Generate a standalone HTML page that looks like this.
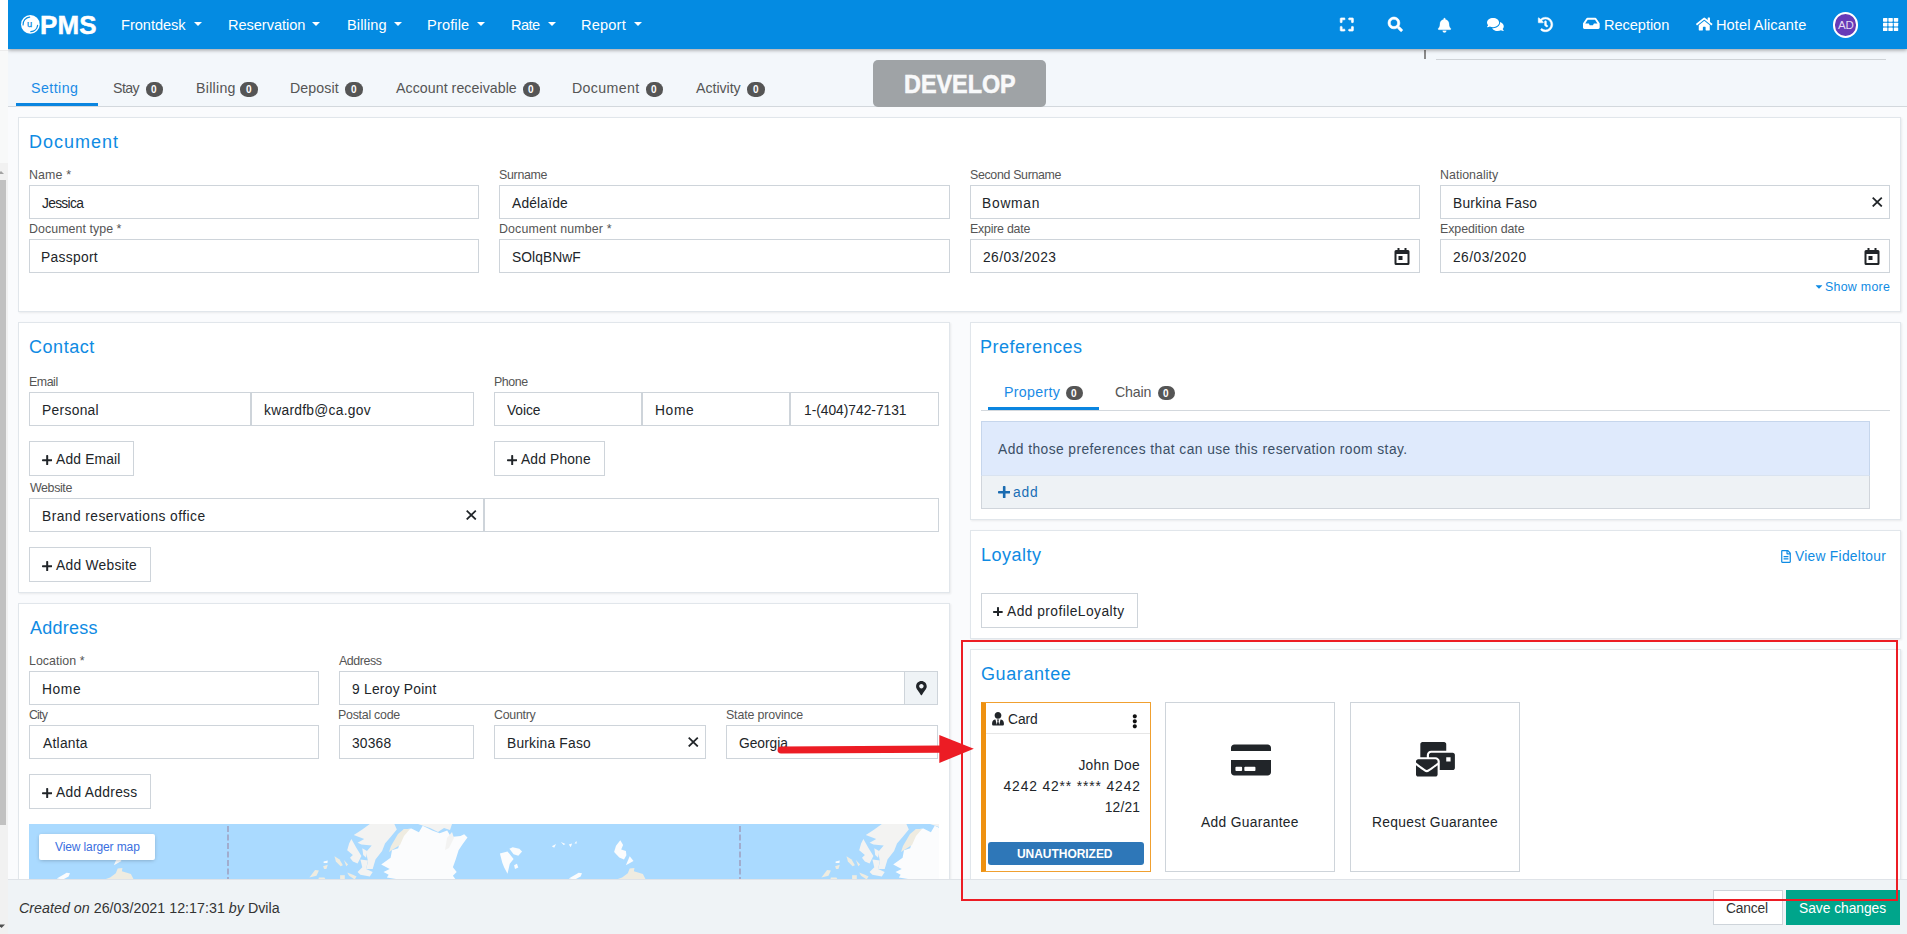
<!DOCTYPE html>
<html lang="en">
<head>
<meta charset="utf-8">
<title>PMS - Profile</title>
<style>
*{box-sizing:border-box;margin:0;padding:0}
html,body{width:1907px;height:934px;overflow:hidden}
body{font-family:"Liberation Sans",sans-serif;font-size:15px;color:#212529;background:#fafbfd;position:relative}
.t{position:absolute;white-space:pre;display:block}
svg{display:block}
.panel{position:absolute;background:#fff;border:1px solid #e1e6eb;box-shadow:1px 1px 2px rgba(0,0,0,.07)}
.inp{position:absolute;height:34px;border:1px solid #ced4da;background:#fff}
.btn{position:absolute;height:34px;border:1px solid #ced4da;background:#fff}
.badge{position:absolute;background:#555;border-radius:7.3px;height:14.600px;width:17.400px}
.caret{position:absolute;width:0;height:0;border-left:4px solid transparent;border-right:4px solid transparent;border-top:4px solid #fff}
</style>
</head>
<body>
<div style="position:absolute;left:0px;top:0px;width:8px;height:934px;background:#f1f1f1;z-index:9"><div style="position:absolute;left:0px;top:0px;width:8px;height:50px;background:#fff"></div><div style="position:absolute;left:0px;top:50px;width:8px;height:1px;background:#ececec"></div><div style="position:absolute;left:0px;top:51px;width:8px;height:112px;background:#f8f9f9"></div><div style="position:absolute;left:0px;top:180px;width:6px;height:645px;background:#c1c1c1"></div><svg style="position:absolute;left:0;top:168px" width="8" height="8" viewBox="0 0 8 8"><path d="M-2 6 L1 3 L4 6z" fill="#a3a3a3"/></svg><svg style="position:absolute;left:0;top:922px" width="8" height="8" viewBox="0 0 8 8"><path d="M-2 2.500 L1.500 6 L5 2.500z" fill="#505050"/></svg></div>
<div style="position:absolute;left:8px;top:0px;width:1899px;height:49px;background:#048be2;box-shadow:0 1px 4px rgba(0,0,0,.4);z-index:5"></div><div style="position:absolute;left:0px;top:0px;width:1907px;height:60px;z-index:6"><span class="t" style="top:15px;font-size:14.6px;line-height:20px;left:121px;letter-spacing:-0.030px;color:#fff;">Frontdesk</span><div class="caret" style="left:194.4px;top:22px"></div><span class="t" style="top:15px;font-size:14.6px;line-height:20px;left:228px;letter-spacing:-0.055px;color:#fff;">Reservation</span><div class="caret" style="left:312px;top:22px"></div><span class="t" style="top:15px;font-size:14.6px;line-height:20px;left:347px;letter-spacing:0.121px;color:#fff;">Billing</span><div class="caret" style="left:393.5px;top:22px"></div><span class="t" style="top:15px;font-size:14.6px;line-height:20px;left:427px;letter-spacing:0.143px;color:#fff;">Profile</span><div class="caret" style="left:477px;top:22px"></div><span class="t" style="top:15px;font-size:14.6px;line-height:20px;left:511px;letter-spacing:-0.569px;color:#fff;">Rate</span><div class="caret" style="left:548px;top:22px"></div><span class="t" style="top:15px;font-size:14.6px;line-height:20px;left:581px;letter-spacing:0.179px;color:#fff;">Report</span><div class="caret" style="left:634px;top:22px"></div><svg style="position:absolute;left:20px;top:14px" width="21" height="21" viewBox="20 14 21 21"><circle cx="30.35" cy="24.400" r="9.350" fill="#fff"/><path d="M23.080 25.030 A7.300 7.300 0 0 1 29.710 17.130" stroke="#048be2" stroke-width="1.150" fill="none" stroke-linecap="round"/><path d="M37.600 25.400 A7.300 7.300 0 0 1 30.800 31.690" stroke="#048be2" stroke-width="1.150" fill="none" stroke-linecap="round"/></svg><span class="t" style="top:16px;font-size:9.4px;line-height:15px;left:27px;color:#048be2;-webkit-text-stroke:0.250px #048be2;">u</span><span class="t" style="top:8px;font-size:26px;line-height:34px;left:40px;letter-spacing:0.171px;color:#fff;font-weight:bold;-webkit-text-stroke:0.450px #fff;">PMS</span><svg style="position:absolute;left:1339.7px;top:17.3px;overflow:visible" width="13.6" height="15" viewBox="0 0 448 512" preserveAspectRatio="xMidYMid meet" fill="#fff" stroke="#fff" stroke-width="22" stroke-linejoin="round"><path d="M0 180V56c0-13.300 10.700-24 24-24h124c6.600 0 12 5.400 12 12v40c0 6.600-5.400 12-12 12H64v84c0 6.600-5.400 12-12 12H12c-6.600 0-12-5.400-12-12zM288 44v40c0 6.600 5.400 12 12 12h84v84c0 6.600 5.400 12 12 12h40c6.600 0 12-5.400 12-12V56c0-13.300-10.700-24-24-24H300c-6.600 0-12 5.400-12 12zm148 276h-40c-6.600 0-12 5.400-12 12v84h-84c-6.600 0-12 5.400-12 12v40c0 6.600 5.400 12 12 12h124c13.300 0 24-10.700 24-24V332c0-6.600-5.400-12-12-12zM160 468v-40c0-6.600-5.400-12-12-12H64v-84c0-6.600-5.400-12-12-12H12c-6.600 0-12 5.400-12 12v124c0 13.300 10.700 24 24 24h124c6.600 0 12-5.400 12-12z"/></svg><svg style="position:absolute;left:1388.4px;top:17.4px;overflow:visible" width="14.6" height="14.6" viewBox="0 0 512 512" preserveAspectRatio="xMidYMid meet" fill="#fff" stroke="#fff" stroke-width="22" stroke-linejoin="round"><path d="M505 442.700L405.300 343c-4.500-4.500-10.600-7-17-7H372c27.600-35.300 44-79.700 44-128C416 93.100 322.900 0 208 0S0 93.100 0 208s93.100 208 208 208c48.300 0 92.700-16.400 128-44v16.300c0 6.400 2.500 12.500 7 17l99.700 99.700c9.400 9.400 24.600 9.400 33.900 0l28.300-28.300c9.400-9.400 9.400-24.600.1-34zM208 336c-70.700 0-128-57.200-128-128 0-70.700 57.200-128 128-128 70.700 0 128 57.200 128 128 0 70.700-57.200 128-128 128z"/></svg><svg style="position:absolute;left:1438.4px;top:17.5px;overflow:visible" width="13" height="14.5" viewBox="0 0 448 512" preserveAspectRatio="xMidYMid meet" fill="#fff" stroke="#fff" stroke-width="8" stroke-linejoin="round"><path d="M224 512c35.320 0 63.970-28.650 63.970-64H160.030c0 35.350 28.650 64 63.970 64zm215.390-149.710c-19.320-20.760-55.470-51.990-55.470-154.290 0-77.700-54.480-139.900-127.940-155.160V32c0-17.670-14.320-32-31.980-32s-31.980 14.330-31.980 32v20.840C118.560 68.100 64.080 130.300 64.080 208c0 102.300-36.150 133.530-55.470 154.290-6 6.450-8.660 14.160-8.610 21.710.11 16.400 12.980 32 32.100 32h383.800c19.120 0 32-15.600 32.100-32 .05-7.550-2.610-15.270-8.610-21.710z"/></svg><svg style="position:absolute;left:1486.6px;top:17px;overflow:visible" width="16.8" height="14.93" viewBox="0 0 576 512" preserveAspectRatio="xMidYMid meet" fill="#fff"><path d="M416 192c0-88.400-93.100-160-208-160S0 103.600 0 192c0 34.300 14.100 65.900 38 92-13.400 30.200-35.500 54.200-35.800 54.500-2.200 2.300-2.800 5.700-1.500 8.700S4.800 352 8 352c36.600 0 66.900-12.300 88.700-25 32.200 15.700 70.300 25 111.300 25 114.900 0 208-71.600 208-160zm122 220c23.900-26 38-57.700 38-92 0-66.900-53.500-124.200-129.300-148.100.9 6.600 1.300 13.300 1.300 20.100 0 105.900-107.700 192-240 192-10.800 0-21.300-.8-31.700-1.900C207.800 439.600 281.800 480 368 480c41 0 79.100-9.200 111.300-25 21.800 12.700 52.100 25 88.700 25 3.200 0 6.100-1.900 7.300-4.800 1.300-2.900.7-6.300-1.500-8.700-.3-.3-22.400-24.200-35.800-54.500z"/></svg><svg style="position:absolute;left:1538px;top:17.3px;overflow:visible" width="15" height="15" viewBox="0 0 512 512" preserveAspectRatio="xMidYMid meet" fill="#fff" stroke="#fff" stroke-width="14" stroke-linejoin="round"><path d="M504 255.531c.253 136.640-111.180 248.372-247.820 248.468-59.015.042-113.223-20.530-155.822-54.911-11.077-8.940-11.905-25.541-1.839-35.607l11.267-11.267c8.609-8.609 22.353-9.551 31.891-1.984C173.062 425.135 212.781 440 256 440c101.705 0 184-82.311 184-184 0-101.705-82.311-184-184-184-48.814 0-93.149 18.969-126.068 49.932l50.754 50.754c10.080 10.080 2.941 27.314-11.313 27.314H24c-8.837 0-16-7.163-16-16V38.627c0-14.254 17.234-21.393 27.314-11.314l49.372 49.372C129.209 34.136 189.552 8 256 8c136.810 0 247.747 110.780 248 247.531zm-180.912 78.784l9.823-12.630c8.138-10.463 6.253-25.542-4.210-33.679L288 256.349V152c0-13.255-10.745-24-24-24h-16c-13.255 0-24 10.745-24 24v135.651l65.409 50.874c10.463 8.137 25.541 6.253 33.679-4.210z"/></svg><svg style="position:absolute;left:1583.2px;top:16.45px;overflow:visible" width="16.7" height="14.85" viewBox="0 0 576 512" preserveAspectRatio="xMidYMid meet" fill="#fff"><path d="M567.938 243.908L462.250 85.374A48.003 48.003 0 0 0 422.311 64H153.689a48 48 0 0 0-39.938 21.374L8.062 243.908A47.994 47.994 0 0 0 0 270.533V400c0 26.510 21.490 48 48 48h480c26.510 0 48-21.490 48-48V270.533a47.994 47.994 0 0 0-8.062-26.625zM162.252 128h251.497l85.333 128H376l-32 64H232l-32-64H76.918l85.334-128z"/></svg><span class="t" style="top:15px;font-size:14.6px;line-height:20px;left:1604px;letter-spacing:-0.052px;color:#fff;">Reception</span><svg style="position:absolute;left:1695.5px;top:15.5px;overflow:visible" width="16.5" height="16" viewBox="0 0 576 512" preserveAspectRatio="xMidYMid meet" fill="#fff"><path d="M280.370 148.260L96 300.110V464a16 16 0 0 0 16 16l112.060-.290a16 16 0 0 0 15.920-16V368a16 16 0 0 1 16-16h64a16 16 0 0 1 16 16v95.640a16 16 0 0 0 16 16.050L464 480a16 16 0 0 0 16-16V300L295.670 148.260a12.190 12.190 0 0 0-15.300 0zM571.600 251.470L488 182.560V44.050a12 12 0 0 0-12-12h-56a12 12 0 0 0-12 12v72.610L318.470 43a48 48 0 0 0-61 0L4.340 251.470a12 12 0 0 0-1.600 16.900l25.500 31A12 12 0 0 0 45.150 301l235.220-193.740a12.190 12.190 0 0 1 15.300 0L530.900 301a12 12 0 0 0 16.900-1.600l25.500-31a12 12 0 0 0-1.700-16.930z"/></svg><span class="t" style="top:15px;font-size:14.6px;line-height:20px;left:1716px;letter-spacing:0.083px;color:#fff;">Hotel Alicante</span><div style="position:absolute;left:1832.5px;top:12px;width:25.5px;height:25.5px;border-radius:50%;background:#673ab7;border:2px solid #fff"></div><span class="t" style="top:17px;font-size:11.5px;line-height:16px;left:1838px;letter-spacing:-0.212px;color:#e4dcf3;">AD</span><svg style="position:absolute;left:1883.3px;top:18px" width="16" height="14" viewBox="0 0 16 14" fill="#fff"><rect x="0.0" y="0.0" width="4.4" height="3.7" rx=".6"/><rect x="5.4" y="0.0" width="4.4" height="3.7" rx=".6"/><rect x="10.8" y="0.0" width="4.4" height="3.7" rx=".6"/><rect x="0.0" y="4.7" width="4.4" height="3.7" rx=".6"/><rect x="5.4" y="4.7" width="4.4" height="3.7" rx=".6"/><rect x="10.8" y="4.7" width="4.4" height="3.7" rx=".6"/><rect x="0.0" y="9.4" width="4.4" height="3.7" rx=".6"/><rect x="5.4" y="9.4" width="4.4" height="3.7" rx=".6"/><rect x="10.8" y="9.4" width="4.4" height="3.7" rx=".6"/></svg></div>
<div style="position:absolute;left:8px;top:49px;width:1899px;height:57px;background:#f3f7fb"></div><div style="position:absolute;left:8px;top:106px;width:1899px;height:1px;background:#d3d8dd"></div><div style="position:absolute;left:1424px;top:50px;width:1.5px;height:9px;background:#8a8a8a"></div><div style="position:absolute;left:1436px;top:59px;width:450px;height:1px;background:#cfd3d7"></div><span class="t" style="top:78px;font-size:14.2px;line-height:20px;left:31px;letter-spacing:0.452px;color:#1a8be6;">Setting</span><div style="position:absolute;left:16px;top:103px;width:82px;height:3px;background:#0a85e0"></div><span class="t" style="top:78px;font-size:14.2px;line-height:20px;left:113px;letter-spacing:-0.575px;color:#555;">Stay</span><div class="badge" style="left:146px;top:82px"></div><span class="t" style="top:82px;font-size:10px;line-height:15px;left:151px;color:#fff;font-weight:bold;">0</span><span class="t" style="top:78px;font-size:14.2px;line-height:20px;left:196px;letter-spacing:0.277px;color:#555;">Billing</span><div class="badge" style="left:240.2px;top:82px"></div><span class="t" style="top:82px;font-size:10px;line-height:15px;left:246px;color:#fff;font-weight:bold;">0</span><span class="t" style="top:78px;font-size:14.2px;line-height:20px;left:290px;letter-spacing:0.106px;color:#555;">Deposit</span><div class="badge" style="left:345.2px;top:82px"></div><span class="t" style="top:82px;font-size:10px;line-height:15px;left:351px;color:#fff;font-weight:bold;">0</span><span class="t" style="top:78px;font-size:14.2px;line-height:20px;left:396px;letter-spacing:0.052px;color:#555;">Account receivable</span><div class="badge" style="left:522.8px;top:82px"></div><span class="t" style="top:82px;font-size:10px;line-height:15px;left:528px;color:#fff;font-weight:bold;">0</span><span class="t" style="top:78px;font-size:14.2px;line-height:20px;left:572px;letter-spacing:0.349px;color:#555;">Document</span><div class="badge" style="left:646px;top:82px"></div><span class="t" style="top:82px;font-size:10px;line-height:15px;left:651px;color:#fff;font-weight:bold;">0</span><span class="t" style="top:78px;font-size:14.2px;line-height:20px;left:696px;letter-spacing:-0.038px;color:#555;">Activity</span><div class="badge" style="left:747.2px;top:82px"></div><span class="t" style="top:82px;font-size:10px;line-height:15px;left:753px;color:#fff;font-weight:bold;">0</span><div style="position:absolute;left:873px;top:60px;width:173px;height:47px;background:#9fa3a6;border-radius:5px"></div><span class="t" style="top:68px;font-size:25.5px;line-height:32px;left:903.53px;transform-origin:0 0;transform:scaleX(0.9165);color:#f8f9fa;font-weight:bold;-webkit-text-stroke:0.600px #f8f9fa;">DEVELOP</span>
<div class="panel" style="left:18px;top:117px;width:1883px;height:195px"></div><span class="t" style="top:130px;font-size:18px;line-height:24px;left:29px;letter-spacing:1.004px;color:#0f8be3;">Document</span><span class="t" style="top:166px;font-size:12.4px;line-height:18px;left:29px;letter-spacing:0.139px;color:#555;">Name *</span><span class="t" style="top:166px;font-size:12.4px;line-height:18px;left:499px;letter-spacing:-0.294px;color:#555;">Surname</span><span class="t" style="top:166px;font-size:12.4px;line-height:18px;left:970px;letter-spacing:-0.330px;color:#555;">Second Surname</span><span class="t" style="top:166px;font-size:12.4px;line-height:18px;left:1440px;letter-spacing:0.032px;color:#555;">Nationality</span><span class="t" style="top:220px;font-size:12.4px;line-height:18px;left:29px;letter-spacing:0.058px;color:#555;">Document type *</span><span class="t" style="top:220px;font-size:12.4px;line-height:18px;left:499px;letter-spacing:0.142px;color:#555;">Document number *</span><span class="t" style="top:220px;font-size:12.4px;line-height:18px;left:970px;letter-spacing:-0.241px;color:#555;">Expire date</span><span class="t" style="top:220px;font-size:12.4px;line-height:18px;left:1440px;letter-spacing:-0.056px;color:#555;">Expedition date</span><div class="inp" style="left:29px;top:185px;width:450px;height:34px;"></div><div class="inp" style="left:29px;top:239px;width:450px;height:34px;"></div><div class="inp" style="left:499px;top:185px;width:451px;height:34px;"></div><div class="inp" style="left:499px;top:239px;width:451px;height:34px;"></div><div class="inp" style="left:970px;top:185px;width:450px;height:34px;"></div><div class="inp" style="left:970px;top:239px;width:450px;height:34px;"></div><div class="inp" style="left:1440px;top:185px;width:450px;height:34px;"></div><div class="inp" style="left:1440px;top:239px;width:450px;height:34px;"></div><span class="t" style="top:194px;font-size:13.8px;line-height:19px;left:42px;letter-spacing:-0.701px;color:#212529;">Jessica</span><span class="t" style="top:194px;font-size:13.8px;line-height:19px;left:512px;letter-spacing:0.175px;color:#212529;">Adélaïde</span><span class="t" style="top:194px;font-size:13.8px;line-height:19px;left:982px;letter-spacing:0.750px;color:#212529;">Bowman</span><span class="t" style="top:194px;font-size:13.8px;line-height:19px;left:1453px;letter-spacing:0.244px;color:#212529;">Burkina Faso</span><span class="t" style="top:248px;font-size:13.8px;line-height:19px;left:41px;letter-spacing:0.318px;color:#212529;">Passport</span><span class="t" style="top:248px;font-size:13.8px;line-height:19px;left:512px;letter-spacing:0.075px;color:#212529;">SOlqBNwF</span><span class="t" style="top:248px;font-size:13.8px;line-height:19px;left:983px;letter-spacing:0.435px;color:#212529;">26/03/2023</span><span class="t" style="top:248px;font-size:13.8px;line-height:19px;left:1453px;letter-spacing:0.447px;color:#212529;">26/03/2020</span><svg style="position:absolute;left:1872.1px;top:197px" width="10.5" height="10.2" viewBox="0 0 10.5 10.2" stroke="#212529" stroke-width="1.75" fill="none"><path d="M.7.7 L9.800 9.500 M9.800.7 L.7 9.500"/></svg><svg style="position:absolute;left:1394px;top:248px" width="16" height="17" viewBox="0 0 16 17"><path d="M3.500 0h2v2h5V0h2v2h1.500a1.500 1.500 0 0 1 1.500 1.500v12a1.500 1.500 0 0 1-1.500 1.500h-12A1.500 1.500 0 0 1 .5 15.500v-12A1.500 1.500 0 0 1 2 2h1.500zM2.500 6v9h11V6zM4.500 8h4v4h-4z" fill="#212529" fill-rule="evenodd"/></svg><svg style="position:absolute;left:1864px;top:248px" width="16" height="17" viewBox="0 0 16 17"><path d="M3.500 0h2v2h5V0h2v2h1.500a1.500 1.500 0 0 1 1.500 1.500v12a1.500 1.500 0 0 1-1.500 1.500h-12A1.500 1.500 0 0 1 .5 15.500v-12A1.500 1.500 0 0 1 2 2h1.500zM2.500 6v9h11V6zM4.500 8h4v4h-4z" fill="#212529" fill-rule="evenodd"/></svg><svg style="position:absolute;left:1815px;top:281px;overflow:visible" width="8" height="11" viewBox="0 0 320 512" preserveAspectRatio="xMidYMid meet" fill="#0f8be3"><path d="M31.300 192h257.300c17.800 0 26.700 21.500 14.100 34.100L174.100 354.800c-7.800 7.800-20.500 7.800-28.300 0L17.200 226.100C4.600 213.500 13.500 192 31.300 192z"/></svg><span class="t" style="top:278px;font-size:12.4px;line-height:18px;left:1825px;letter-spacing:0.276px;color:#0f8be3;">Show more</span>
<div class="panel" style="left:18px;top:322px;width:932px;height:271px"></div><span class="t" style="top:335px;font-size:18px;line-height:24px;left:29px;letter-spacing:0.556px;color:#0f8be3;">Contact</span><span class="t" style="top:373px;font-size:12.4px;line-height:18px;left:29px;letter-spacing:-0.462px;color:#555;">Email</span><span class="t" style="top:373px;font-size:12.4px;line-height:18px;left:494px;letter-spacing:-0.417px;color:#555;">Phone</span><div class="inp" style="left:29px;top:392px;width:222px;height:34px;"></div><div class="inp" style="left:251px;top:392px;width:223px;height:34px;"></div><div class="inp" style="left:494px;top:392px;width:148px;height:34px;"></div><div class="inp" style="left:642px;top:392px;width:148px;height:34px;"></div><div class="inp" style="left:790px;top:392px;width:149px;height:34px;"></div><span class="t" style="top:401px;font-size:13.8px;line-height:19px;left:42px;letter-spacing:0.318px;color:#212529;">Personal</span><span class="t" style="top:401px;font-size:13.8px;line-height:19px;left:264px;letter-spacing:0.283px;color:#212529;">kwardfb@ca.gov</span><span class="t" style="top:401px;font-size:13.8px;line-height:19px;left:507px;letter-spacing:-0.078px;color:#212529;">Voice</span><span class="t" style="top:401px;font-size:13.8px;line-height:19px;left:655px;letter-spacing:0.652px;color:#212529;">Home</span><span class="t" style="top:401px;font-size:13.8px;line-height:19px;left:804px;letter-spacing:-0.019px;color:#212529;">1-(404)742-7131</span><div class="btn" style="left:29px;top:441px;width:105px;height:35px;"></div><svg style="position:absolute;left:41.8px;top:454.8px" width="10.2" height="10.2" viewBox="0 0 10.2 10.2" fill="#212529"><rect x="0" y="4.199999999999999" width="10.2" height="2.0" rx=".7"/><rect x="4.199999999999999" y="0" width="2.0" height="10.2" rx=".7"/></svg><span class="t" style="top:450px;font-size:13.8px;line-height:19px;left:56px;letter-spacing:0.189px;color:#212529;">Add Email</span><div class="btn" style="left:494px;top:441px;width:111px;height:35px;"></div><svg style="position:absolute;left:506.8px;top:454.8px" width="10.2" height="10.2" viewBox="0 0 10.2 10.2" fill="#212529"><rect x="0" y="4.199999999999999" width="10.2" height="2.0" rx=".7"/><rect x="4.199999999999999" y="0" width="2.0" height="10.2" rx=".7"/></svg><span class="t" style="top:450px;font-size:13.8px;line-height:19px;left:521px;letter-spacing:0.164px;color:#212529;">Add Phone</span><span class="t" style="top:479px;font-size:12.4px;line-height:18px;left:30px;letter-spacing:-0.376px;color:#555;">Website</span><div class="inp" style="left:29px;top:498px;width:455px;height:34px;"></div><div class="inp" style="left:484px;top:498px;width:455px;height:34px;"></div><span class="t" style="top:507px;font-size:13.8px;line-height:19px;left:42px;letter-spacing:0.447px;color:#212529;">Brand reservations office</span><svg style="position:absolute;left:466.2px;top:510.2px" width="10.5" height="10.2" viewBox="0 0 10.5 10.2" stroke="#212529" stroke-width="1.75" fill="none"><path d="M.7.7 L9.800 9.500 M9.800.7 L.7 9.500"/></svg><div class="btn" style="left:29px;top:547px;width:122px;height:35px;"></div><svg style="position:absolute;left:41.8px;top:560.8px" width="10.2" height="10.2" viewBox="0 0 10.2 10.2" fill="#212529"><rect x="0" y="4.199999999999999" width="10.2" height="2.0" rx=".7"/><rect x="4.199999999999999" y="0" width="2.0" height="10.2" rx=".7"/></svg><span class="t" style="top:556px;font-size:13.8px;line-height:19px;left:56px;letter-spacing:0.276px;color:#212529;">Add Website</span>
<div class="panel" style="left:18px;top:603px;width:932px;height:290px"></div><span class="t" style="top:616px;font-size:18px;line-height:24px;left:30px;letter-spacing:0.234px;color:#0f8be3;">Address</span><span class="t" style="top:652px;font-size:12.4px;line-height:18px;left:29px;letter-spacing:0.041px;color:#555;">Location *</span><span class="t" style="top:652px;font-size:12.4px;line-height:18px;left:339px;letter-spacing:-0.434px;color:#555;">Address</span><div class="inp" style="left:29px;top:671px;width:290px;height:34px;"></div><div class="inp" style="left:339px;top:671px;width:566px;height:34px;"></div><div style="position:absolute;left:904px;top:671px;width:34px;height:34px;border:1px solid #ced4da;background:#eff3f6"></div><svg style="position:absolute;left:916.2px;top:681px;overflow:visible" width="10.8" height="14.2" viewBox="0 0 384 512" preserveAspectRatio="xMidYMid meet" fill="#212529"><path d="M172.268 501.670C26.970 291.031 0 269.413 0 192 0 85.961 85.961 0 192 0s192 85.961 192 192c0 77.413-26.970 99.031-172.268 309.670-9.535 13.774-29.930 13.773-39.464 0zM192 272c44.183 0 80-35.817 80-80s-35.817-80-80-80-80 35.817-80 80 35.817 80 80 80z"/></svg><span class="t" style="top:680px;font-size:13.8px;line-height:19px;left:42px;letter-spacing:0.618px;color:#212529;">Home</span><span class="t" style="top:680px;font-size:13.8px;line-height:19px;left:352px;letter-spacing:0.252px;color:#212529;">9 Leroy Point</span><span class="t" style="top:706px;font-size:12.4px;line-height:18px;left:29px;letter-spacing:-0.830px;color:#555;">City</span><span class="t" style="top:706px;font-size:12.4px;line-height:18px;left:338px;letter-spacing:-0.251px;color:#555;">Postal code</span><span class="t" style="top:706px;font-size:12.4px;line-height:18px;left:494px;letter-spacing:-0.265px;color:#555;">Country</span><span class="t" style="top:706px;font-size:12.4px;line-height:18px;left:726px;letter-spacing:-0.151px;color:#555;">State province</span><div class="inp" style="left:29px;top:725px;width:290px;height:34px;"></div><div class="inp" style="left:339px;top:725px;width:135px;height:34px;"></div><div class="inp" style="left:494px;top:725px;width:212px;height:34px;"></div><div class="inp" style="left:726px;top:725px;width:212px;height:34px;"></div><span class="t" style="top:734px;font-size:13.8px;line-height:19px;left:43px;letter-spacing:0.264px;color:#212529;">Atlanta</span><span class="t" style="top:734px;font-size:13.8px;line-height:19px;left:352px;letter-spacing:0.188px;color:#212529;">30368</span><span class="t" style="top:734px;font-size:13.8px;line-height:19px;left:507px;letter-spacing:0.217px;color:#212529;">Burkina Faso</span><span class="t" style="top:734px;font-size:13.8px;line-height:19px;left:739px;letter-spacing:-0.040px;color:#212529;">Georgia</span><svg style="position:absolute;left:688.4px;top:737px" width="10.5" height="10.2" viewBox="0 0 10.5 10.2" stroke="#212529" stroke-width="1.75" fill="none"><path d="M.7.7 L9.800 9.500 M9.800.7 L.7 9.500"/></svg><div class="btn" style="left:29px;top:774px;width:122px;height:35px;"></div><svg style="position:absolute;left:41.8px;top:788px" width="10.2" height="10.2" viewBox="0 0 10.2 10.2" fill="#212529"><rect x="0" y="4.199999999999999" width="10.2" height="2.0" rx=".7"/><rect x="4.199999999999999" y="0" width="2.0" height="10.2" rx=".7"/></svg><span class="t" style="top:783px;font-size:13.8px;line-height:19px;left:56px;letter-spacing:0.296px;color:#212529;">Add Address</span><svg style="position:absolute;left:29px;top:824px" width="910" height="56" viewBox="29 824 910 56"><rect x="29" y="824" width="910" height="56" fill="#aadaff"/><g transform="translate(-284 824)"><polygon fill="#fbfcfd" points="171.1,12.0 175.8,5.4 183.4,4.5 190.9,8.3 194.7,1.7 204.2,6.4 211.7,9.2 219.2,6.4 223.0,13.0 232.5,12.0 236.2,10.2 239.5,13.5 234.4,20.5 230.6,26.2 227.7,35.6 224.9,43.2 228.7,47.9 224.9,51.7 227.7,55.5 171.1,55.5 158.8,53.6 160.7,50.7 155.5,47.9 161.7,45.1 153.2,40.4 162.6,33.8 164.0,26.2 170.2,24.3 172.0,17.7"/><polygon fill="#efece1" points="170.0,10.0 176.0,5.0 182.0,5.0 176.0,12.0 172.0,21.0 161.0,28.0 163.0,22.0"/><polygon fill="#f3f3f2" points="141.8,0.0 166.4,0.0 168.8,5.4 162.6,13.0 157.0,19.6 154.1,27.1 147.5,35.6 144.7,45.1 138.1,45.1 140.0,37.5 138.1,28.1 143.7,21.5 133.4,20.5 129.6,18.7 136.2,14.9 125.8,11.1 134.3,5.4"/><polygon fill="#f3f3f2" points="123.4,14.9 128.6,24.3 133.4,31.9 129.6,39.4 124.9,37.5 122.0,33.8 124.9,30.9 119.2,26.2 121.1,19.6"/><polygon fill="#f3f3f2" points="134.3,24.3 139.0,27.1 138.1,33.8 135.2,30.9"/><polygon fill="#f3f3f2" points="132.4,35.6 140.0,36.6 138.1,45.1 144.7,47.9 141.8,52.6 132.4,50.7 129.6,47.9 134.3,43.2"/><polygon fill="#f3f3f2" points="190.0,0.0 224.0,0.0 222.0,6.0 216.0,4.0 210.0,8.0 202.0,4.0 196.0,2.0"/><polygon fill="#f3f3f2" points="219.0,14.0 224.0,8.0 226.0,14.0 221.0,24.0 217.0,26.0"/><polygon fill="#efece1" points="106.5,32.3 111.6,35.6 114.9,41.3 112.6,42.3 107.9,37.5"/><polygon fill="#efece1" points="115.9,36.1 120.1,40.4 118.3,42.3"/><polygon fill="#fbfcfd" points="95.6,37.5 99.8,36.6 99.4,38.9 95.6,38.9"/><polygon fill="#efece1" points="95.1,42.3 99.8,40.8 98.4,45.1 96.1,45.1"/><polygon fill="#efece1" points="81.4,53.6 87.1,46.0 90.9,46.5 88.5,51.7"/><polygon fill="#efece1" points="119.2,48.4 124.9,50.7 128.6,52.6 126.7,55.5 121.1,51.7"/><polygon fill="#efece1" points="112.1,51.2 116.8,51.2 116.8,55.5 112.1,55.5"/><polygon fill="#efece1" points="90.9,53.6 96.5,53.6 97.5,55.5 90.4,55.5"/><polygon fill="#fbfcfd" points="271.9,29.4 279.5,27.5 285.6,35.0 281.8,39.8 279.5,49.7 276.2,43.5 274.3,38.8"/><polygon fill="#fbfcfd" points="281.4,24.7 284.7,23.2 291.3,24.7 294.1,27.5 290.3,31.7 285.6,30.3"/><polygon fill="#fbfcfd" points="286.1,41.2 288.9,39.8 290.3,43.5 287.0,44.9"/><polygon fill="#fbfcfd" points="323.8,22.3 328.1,19.9 326.2,23.7"/><polygon fill="#fbfcfd" points="332.8,18.0 337.5,19.9 335.6,20.9"/><polygon fill="#fbfcfd" points="340.8,20.4 344.1,19.5 342.7,23.2"/><polygon fill="#fbfcfd" points="346.5,19.5 348.4,17.1 348.8,19.5"/><polygon fill="#fbfcfd" points="392.3,16.2 395.1,20.9 393.2,25.6 397.9,27.0 398.4,31.3 396.0,35.5 391.3,33.6 386.1,28.0 388.0,21.8"/><polygon fill="#fbfcfd" points="401.7,32.2 405.5,36.9 397.9,41.2"/><polygon fill="#efece1" points="388.5,55.5 394.1,53.4 399.8,49.2 401.7,44.5 406.4,44.0 405.9,47.3 414.9,50.1 417.7,55.5"/><polygon fill="#fbfcfd" points="340.8,54.4 350.7,48.7 354.0,49.2 352.6,52.5 347.0,55.5"/></g><g transform="translate(228 824)"><polygon fill="#fbfcfd" points="171.1,12.0 175.8,5.4 183.4,4.5 190.9,8.3 194.7,1.7 204.2,6.4 211.7,9.2 219.2,6.4 223.0,13.0 232.5,12.0 236.2,10.2 239.5,13.5 234.4,20.5 230.6,26.2 227.7,35.6 224.9,43.2 228.7,47.9 224.9,51.7 227.7,55.5 171.1,55.5 158.8,53.6 160.7,50.7 155.5,47.9 161.7,45.1 153.2,40.4 162.6,33.8 164.0,26.2 170.2,24.3 172.0,17.7"/><polygon fill="#efece1" points="170.0,10.0 176.0,5.0 182.0,5.0 176.0,12.0 172.0,21.0 161.0,28.0 163.0,22.0"/><polygon fill="#f3f3f2" points="141.8,0.0 166.4,0.0 168.8,5.4 162.6,13.0 157.0,19.6 154.1,27.1 147.5,35.6 144.7,45.1 138.1,45.1 140.0,37.5 138.1,28.1 143.7,21.5 133.4,20.5 129.6,18.7 136.2,14.9 125.8,11.1 134.3,5.4"/><polygon fill="#f3f3f2" points="123.4,14.9 128.6,24.3 133.4,31.9 129.6,39.4 124.9,37.5 122.0,33.8 124.9,30.9 119.2,26.2 121.1,19.6"/><polygon fill="#f3f3f2" points="134.3,24.3 139.0,27.1 138.1,33.8 135.2,30.9"/><polygon fill="#f3f3f2" points="132.4,35.6 140.0,36.6 138.1,45.1 144.7,47.9 141.8,52.6 132.4,50.7 129.6,47.9 134.3,43.2"/><polygon fill="#f3f3f2" points="190.0,0.0 224.0,0.0 222.0,6.0 216.0,4.0 210.0,8.0 202.0,4.0 196.0,2.0"/><polygon fill="#f3f3f2" points="219.0,14.0 224.0,8.0 226.0,14.0 221.0,24.0 217.0,26.0"/><polygon fill="#efece1" points="106.5,32.3 111.6,35.6 114.9,41.3 112.6,42.3 107.9,37.5"/><polygon fill="#efece1" points="115.9,36.1 120.1,40.4 118.3,42.3"/><polygon fill="#fbfcfd" points="95.6,37.5 99.8,36.6 99.4,38.9 95.6,38.9"/><polygon fill="#efece1" points="95.1,42.3 99.8,40.8 98.4,45.1 96.1,45.1"/><polygon fill="#efece1" points="81.4,53.6 87.1,46.0 90.9,46.5 88.5,51.7"/><polygon fill="#efece1" points="119.2,48.4 124.9,50.7 128.6,52.6 126.7,55.5 121.1,51.7"/><polygon fill="#efece1" points="112.1,51.2 116.8,51.2 116.8,55.5 112.1,55.5"/><polygon fill="#efece1" points="90.9,53.6 96.5,53.6 97.5,55.5 90.4,55.5"/><polygon fill="#fbfcfd" points="271.9,29.4 279.5,27.5 285.6,35.0 281.8,39.8 279.5,49.7 276.2,43.5 274.3,38.8"/><polygon fill="#fbfcfd" points="281.4,24.7 284.7,23.2 291.3,24.7 294.1,27.5 290.3,31.7 285.6,30.3"/><polygon fill="#fbfcfd" points="286.1,41.2 288.9,39.8 290.3,43.5 287.0,44.9"/><polygon fill="#fbfcfd" points="323.8,22.3 328.1,19.9 326.2,23.7"/><polygon fill="#fbfcfd" points="332.8,18.0 337.5,19.9 335.6,20.9"/><polygon fill="#fbfcfd" points="340.8,20.4 344.1,19.5 342.7,23.2"/><polygon fill="#fbfcfd" points="346.5,19.5 348.4,17.1 348.8,19.5"/><polygon fill="#fbfcfd" points="392.3,16.2 395.1,20.9 393.2,25.6 397.9,27.0 398.4,31.3 396.0,35.5 391.3,33.6 386.1,28.0 388.0,21.8"/><polygon fill="#fbfcfd" points="401.7,32.2 405.5,36.9 397.9,41.2"/><polygon fill="#efece1" points="388.5,55.5 394.1,53.4 399.8,49.2 401.7,44.5 406.4,44.0 405.9,47.3 414.9,50.1 417.7,55.5"/><polygon fill="#fbfcfd" points="340.8,54.4 350.7,48.7 354.0,49.2 352.6,52.5 347.0,55.5"/></g><g transform="translate(740 824)"><polygon fill="#fbfcfd" points="171.1,12.0 175.8,5.4 183.4,4.5 190.9,8.3 194.7,1.7 204.2,6.4 211.7,9.2 219.2,6.4 223.0,13.0 232.5,12.0 236.2,10.2 239.5,13.5 234.4,20.5 230.6,26.2 227.7,35.6 224.9,43.2 228.7,47.9 224.9,51.7 227.7,55.5 171.1,55.5 158.8,53.6 160.7,50.7 155.5,47.9 161.7,45.1 153.2,40.4 162.6,33.8 164.0,26.2 170.2,24.3 172.0,17.7"/><polygon fill="#efece1" points="170.0,10.0 176.0,5.0 182.0,5.0 176.0,12.0 172.0,21.0 161.0,28.0 163.0,22.0"/><polygon fill="#f3f3f2" points="141.8,0.0 166.4,0.0 168.8,5.4 162.6,13.0 157.0,19.6 154.1,27.1 147.5,35.6 144.7,45.1 138.1,45.1 140.0,37.5 138.1,28.1 143.7,21.5 133.4,20.5 129.6,18.7 136.2,14.9 125.8,11.1 134.3,5.4"/><polygon fill="#f3f3f2" points="123.4,14.9 128.6,24.3 133.4,31.9 129.6,39.4 124.9,37.5 122.0,33.8 124.9,30.9 119.2,26.2 121.1,19.6"/><polygon fill="#f3f3f2" points="134.3,24.3 139.0,27.1 138.1,33.8 135.2,30.9"/><polygon fill="#f3f3f2" points="132.4,35.6 140.0,36.6 138.1,45.1 144.7,47.9 141.8,52.6 132.4,50.7 129.6,47.9 134.3,43.2"/><polygon fill="#f3f3f2" points="190.0,0.0 224.0,0.0 222.0,6.0 216.0,4.0 210.0,8.0 202.0,4.0 196.0,2.0"/><polygon fill="#f3f3f2" points="219.0,14.0 224.0,8.0 226.0,14.0 221.0,24.0 217.0,26.0"/><polygon fill="#efece1" points="106.5,32.3 111.6,35.6 114.9,41.3 112.6,42.3 107.9,37.5"/><polygon fill="#efece1" points="115.9,36.1 120.1,40.4 118.3,42.3"/><polygon fill="#fbfcfd" points="95.6,37.5 99.8,36.6 99.4,38.9 95.6,38.9"/><polygon fill="#efece1" points="95.1,42.3 99.8,40.8 98.4,45.1 96.1,45.1"/><polygon fill="#efece1" points="81.4,53.6 87.1,46.0 90.9,46.5 88.5,51.7"/><polygon fill="#efece1" points="119.2,48.4 124.9,50.7 128.6,52.6 126.7,55.5 121.1,51.7"/><polygon fill="#efece1" points="112.1,51.2 116.8,51.2 116.8,55.5 112.1,55.5"/><polygon fill="#efece1" points="90.9,53.6 96.5,53.6 97.5,55.5 90.4,55.5"/><polygon fill="#fbfcfd" points="271.9,29.4 279.5,27.5 285.6,35.0 281.8,39.8 279.5,49.7 276.2,43.5 274.3,38.8"/><polygon fill="#fbfcfd" points="281.4,24.7 284.7,23.2 291.3,24.7 294.1,27.5 290.3,31.7 285.6,30.3"/><polygon fill="#fbfcfd" points="286.1,41.2 288.9,39.8 290.3,43.5 287.0,44.9"/><polygon fill="#fbfcfd" points="323.8,22.3 328.1,19.9 326.2,23.7"/><polygon fill="#fbfcfd" points="332.8,18.0 337.5,19.9 335.6,20.9"/><polygon fill="#fbfcfd" points="340.8,20.4 344.1,19.5 342.7,23.2"/><polygon fill="#fbfcfd" points="346.5,19.5 348.4,17.1 348.8,19.5"/><polygon fill="#fbfcfd" points="392.3,16.2 395.1,20.9 393.2,25.6 397.9,27.0 398.4,31.3 396.0,35.5 391.3,33.6 386.1,28.0 388.0,21.8"/><polygon fill="#fbfcfd" points="401.7,32.2 405.5,36.9 397.9,41.2"/><polygon fill="#efece1" points="388.5,55.5 394.1,53.4 399.8,49.2 401.7,44.5 406.4,44.0 405.9,47.3 414.9,50.1 417.7,55.5"/><polygon fill="#fbfcfd" points="340.8,54.4 350.7,48.7 354.0,49.2 352.6,52.5 347.0,55.5"/></g><line x1="228.0" y1="826" x2="228.0" y2="880" stroke="#9c8fae" stroke-width="1.200" stroke-dasharray="6 2.500"/><line x1="740.0" y1="826" x2="740.0" y2="880" stroke="#9c8fae" stroke-width="1.200" stroke-dasharray="6 2.500"/></svg><div style="position:absolute;left:39px;top:834px;width:116px;height:26px;background:#fff;border-radius:2px;box-shadow:0 1px 4px -1px rgba(0,0,0,.3)"></div><span class="t" style="top:838px;font-size:12px;line-height:18px;left:55px;letter-spacing:-0.119px;color:#3a6fe0;">View larger map</span>
<div class="panel" style="left:970px;top:322px;width:931px;height:198px"></div><span class="t" style="top:335px;font-size:18px;line-height:24px;left:980px;letter-spacing:0.489px;color:#0f8be3;">Preferences</span><span class="t" style="top:382px;font-size:14.2px;line-height:20px;left:1004px;letter-spacing:0.325px;color:#1a8be6;">Property</span><div class="badge" style="left:1065.5px;top:385.5px"></div><span class="t" style="top:386px;font-size:10px;line-height:15px;left:1071px;color:#fff;font-weight:bold;">0</span><span class="t" style="top:382px;font-size:14.2px;line-height:20px;left:1115px;letter-spacing:-0.172px;color:#555;">Chain</span><div class="badge" style="left:1158px;top:385.5px"></div><span class="t" style="top:386px;font-size:10px;line-height:15px;left:1163px;color:#fff;font-weight:bold;">0</span><div style="position:absolute;left:981px;top:410px;width:909px;height:1px;background:#d3d8dd"></div><div style="position:absolute;left:988px;top:407px;width:111px;height:3px;background:#0a85e0"></div><div style="position:absolute;left:981px;top:421px;width:889px;height:88px;border:1px solid #d0d5db;background:#eef2f5"></div><div style="position:absolute;left:981px;top:421px;width:889px;height:55px;background:#dfeafc;border:1px solid #c6d6ec;border-bottom:1px solid #d9e3f0"></div><span class="t" style="top:440px;font-size:13.8px;line-height:19px;left:998px;letter-spacing:0.438px;color:#3b4f66;">Add those preferences that can use this reservation room stay.</span><svg style="position:absolute;left:997.7px;top:485.6px" width="12.2" height="12.2" viewBox="0 0 12.2 12.2" fill="#1a6bb0"><rect x="0" y="4.8999999999999995" width="12.2" height="2.6" rx=".7"/><rect x="4.8999999999999995" y="0" width="2.6" height="12.2" rx=".7"/></svg><span class="t" style="top:483px;font-size:13.8px;line-height:19px;left:1013px;letter-spacing:0.767px;color:#1a6fb5;">add</span>
<div class="panel" style="left:970px;top:530px;width:931px;height:109px"></div><span class="t" style="top:543px;font-size:18px;line-height:24px;left:981px;letter-spacing:0.484px;color:#0f8be3;">Loyalty</span><svg style="position:absolute;left:1780.5px;top:549.5px;overflow:visible" width="10" height="13" viewBox="0 0 384 512" preserveAspectRatio="xMidYMid meet" fill="#0f8be3"><path d="M288 248v28c0 6.600-5.400 12-12 12H108c-6.600 0-12-5.400-12-12v-28c0-6.600 5.400-12 12-12h168c6.600 0 12 5.400 12 12zm-12 72H108c-6.600 0-12 5.400-12 12v28c0 6.600 5.400 12 12 12h168c6.600 0 12-5.400 12-12v-28c0-6.600-5.400-12-12-12zm108-188.100V464c0 26.500-21.500 48-48 48H48c-26.500 0-48-21.500-48-48V48C0 21.500 21.500 0 48 0h204.100C264.800 0 277 5.100 286 14.100L369.900 98c9 8.900 14.100 21.200 14.100 33.900zm-128-80V128h76.100L256 51.900zM336 464V176H232c-13.300 0-24-10.700-24-24V48H48v416h288z"/></svg><span class="t" style="top:547px;font-size:13.8px;line-height:19px;left:1795px;letter-spacing:0.277px;color:#0f8be3;">View Fideltour</span><div class="btn" style="left:981px;top:593px;width:157px;height:35px;"></div><svg style="position:absolute;left:993.2px;top:606.5px" width="9.8" height="9.8" viewBox="0 0 9.8 9.8" fill="#212529"><rect x="0" y="4.0" width="9.8" height="2.0" rx=".7"/><rect x="4.0" y="0" width="2.0" height="9.8" rx=".7"/></svg><span class="t" style="top:602px;font-size:13.8px;line-height:19px;left:1007px;letter-spacing:0.441px;color:#212529;">Add profileLoyalty</span>
<div class="panel" style="left:970px;top:649px;width:931px;height:240px"></div><span class="t" style="top:662px;font-size:18px;line-height:24px;left:981px;letter-spacing:0.596px;color:#0f8be3;">Guarantee</span><div style="position:absolute;left:981px;top:702px;width:170px;height:170px;border:1px solid #f0a030;border-left:5px solid #ee9111;background:#fff"></div><div style="position:absolute;left:986px;top:733px;width:164px;height:1px;background:#e6e6e6"></div><svg style="position:absolute;left:991.5px;top:712.3px;overflow:visible" width="12" height="13.5" viewBox="0 0 448 512" preserveAspectRatio="xMidYMid meet" fill="#212529"><path d="M224 256c70.700 0 128-57.300 128-128S294.700 0 224 0 96 57.300 96 128s57.300 128 128 128zm95.800 32.600L272 480l-32-136 32-56h-96l32 56-32 136-47.800-191.400C56.900 292 0 350.300 0 422.400V464c0 26.500 21.500 48 48 48h352c26.500 0 48-21.500 48-48v-41.600c0-72.100-56.900-130.400-128.200-133.800z"/></svg><span class="t" style="top:710px;font-size:13.8px;line-height:19px;left:1008px;letter-spacing:-0.065px;color:#212529;">Card</span><svg style="position:absolute;left:1132.2px;top:713.6px;overflow:visible" width="5.6" height="14.6" viewBox="0 0 192 512" preserveAspectRatio="xMidYMid meet" fill="#111"><path d="M96 184c39.800 0 72 32.200 72 72s-32.200 72-72 72-72-32.200-72-72 32.200-72 72-72zM24 80c0 39.800 32.200 72 72 72s72-32.200 72-72S135.800 8 96 8 24 40.200 24 80zm0 352c0 39.800 32.200 72 72 72s72-32.200 72-72-32.200-72-72-72-72 32.200-72 72z"/></svg><span class="t" style="top:756px;font-size:13.8px;line-height:19px;right:767.03px;letter-spacing:0.317px;color:#212529;">John Doe</span><span class="t" style="top:777px;font-size:13.8px;line-height:19px;right:766.25px;letter-spacing:0.882px;color:#212529;">4242 42** **** 4242</span><span class="t" style="top:798px;font-size:13.8px;line-height:19px;right:766.88px;letter-spacing:0.168px;color:#212529;">12/21</span><div style="position:absolute;left:988px;top:842px;width:156px;height:23px;background:#2e77b8;border-radius:3px"></div><span class="t" style="top:845px;font-size:12px;line-height:18px;left:1017px;letter-spacing:-0.042px;color:#fff;font-weight:bold;">UNAUTHORIZED</span><div style="position:absolute;left:1165px;top:702px;width:170px;height:170px;border:1px solid #ced4da;background:#fff"></div><div style="position:absolute;left:1350px;top:702px;width:170px;height:170px;border:1px solid #ced4da;background:#fff"></div><svg style="position:absolute;left:1230.5px;top:742px;overflow:visible" width="40" height="36" viewBox="0 0 576 512" preserveAspectRatio="xMidYMid meet" fill="#212529"><path d="M0 432c0 26.500 21.500 48 48 48h480c26.500 0 48-21.500 48-48V256H0v176zm192-68c0-6.600 5.400-12 12-12h136c6.600 0 12 5.400 12 12v40c0 6.600-5.400 12-12 12H204c-6.600 0-12-5.400-12-12v-40zm-128 0c0-6.600 5.400-12 12-12h72c6.600 0 12 5.400 12 12v40c0 6.600-5.400 12-12 12H76c-6.600 0-12-5.400-12-12v-40zM576 80v48H0V80c0-26.500 21.500-48 48-48h480c26.500 0 48 21.500 48 48z"/></svg><svg style="position:absolute;left:1415.7px;top:742.2px;overflow:visible" width="38.9" height="34.6" viewBox="0 0 576 512" preserveAspectRatio="xMidYMid meet" fill="#212529"><path d="M160 448c-25.600 0-51.200-22.400-64-32-64-44.800-83.200-60.800-96-70.400V480c0 17.670 14.330 32 32 32h256c17.670 0 32-14.330 32-32V345.600c-12.800 9.600-32 25.600-96 70.400-12.800 9.600-38.400 32-64 32zm128-192H32c-17.670 0-32 14.330-32 32v16c25.600 19.200 22.400 19.200 115.200 86.400 9.600 6.400 28.800 25.600 44.800 25.600s35.200-19.200 44.800-22.400c92.800-67.200 89.600-67.200 115.200-86.400V288c0-17.670-14.330-32-32-32zm256-96H224c-17.670 0-32 14.330-32 32v32h96c33.250 0 60.630 25.380 63.750 57.780.8.740.25 1.450.25 2.220v132h192c17.670 0 32-14.330 32-32V192c0-17.670-14.330-32-32-32zm-32 128h-64v-64h64v64zm-352-96c0-35.290 28.710-64 64-64h224V32c0-17.670-14.330-32-32-32H96C78.330 0 64 14.330 64 32v192h96v-32z"/></svg><span class="t" style="top:813px;font-size:13.8px;line-height:19px;left:1201px;letter-spacing:0.324px;color:#212529;">Add Guarantee</span><span class="t" style="top:813px;font-size:13.8px;line-height:19px;left:1372px;letter-spacing:0.326px;color:#212529;">Request Guarantee</span>
<div style="position:absolute;left:8px;top:879px;width:1899px;height:55px;background:#eff3f6;border-top:1px solid #dfe3e8;z-index:3"></div><div style="position:absolute;left:0px;top:0px;width:1907px;height:934px;z-index:4;pointer-events:none"><div class="t" style="left:19px;top:898px;font-size:14.250px;line-height:20px;color:#333;letter-spacing:.02px"><i>Created on</i> 26/03/2021 12:17:31 <i>by</i> Dvila</div><div style="position:absolute;left:1713px;top:890px;width:70px;height:35px;background:#fff;border:1px solid #ced4da"></div><span class="t" style="top:899px;font-size:13.8px;line-height:19px;left:1726px;letter-spacing:-0.184px;color:#333;">Cancel</span><div style="position:absolute;left:1786px;top:890px;width:114px;height:35px;background:#00a58b"></div><span class="t" style="top:899px;font-size:13.8px;line-height:19px;left:1799px;letter-spacing:-0.026px;color:#fff;">Save changes</span></div>
<div style="position:absolute;left:961px;top:640px;width:937px;height:261px;border:2px solid #ec1c24;z-index:8"></div><svg style="position:absolute;left:770px;top:725px;z-index:8" width="210" height="50" viewBox="770 725 210 50"><path d="M781 746.500 L940 745.600 L940 752.800 L781 753.400 A3.450 3.450 0 0 1 781 746.500z" fill="#ec1c24"/><path d="M939.300 735 L973.800 748.700 L939.300 763z" fill="#ec1c24"/></svg>
</body>
</html>
